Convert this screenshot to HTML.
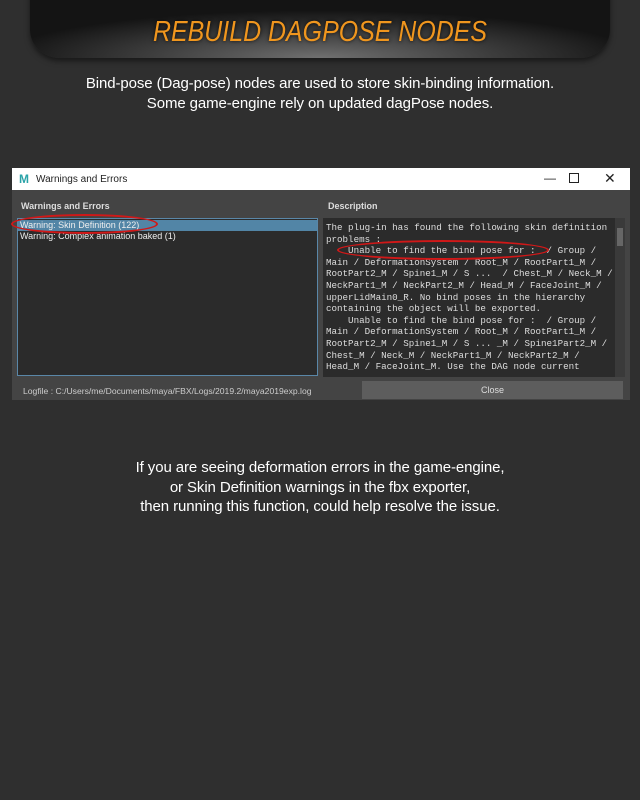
<!DOCTYPE html>
<html><head><style>
*{margin:0;padding:0;box-sizing:border-box}
body{width:640px;height:800px;background:#2f2f2f;position:relative;overflow:hidden;font-family:"Liberation Sans",sans-serif}
.hdr{position:absolute;left:30px;top:-10px;width:580px;height:68px;border-radius:0 0 30px 30px/0 0 28px 28px;background:radial-gradient(ellipse 55% 70% at 50% 100%,#707070 0%,#3c3c3c 55%,#141414 100%);box-shadow:0 3px 6px rgba(0,0,0,.5)}
.title{position:absolute;left:0;width:640px;top:16px;text-align:center;color:#f0961e;font-style:italic;font-size:29px;transform:scaleX(.86);text-shadow:0 0 4px rgba(0,0,0,.8)}
.t{position:absolute;left:0;width:640px;text-align:center;color:#fff;font-size:15px;line-height:19.5px;letter-spacing:-0.1px}
.dlg{position:absolute;left:12px;top:168px;width:618px;height:232px;background:#444}
.tb{position:absolute;left:0;top:0;width:618px;height:22px;background:#fff;color:#222;font-size:10px}
.lbl{position:absolute;color:#ddd;font-size:9px;font-weight:bold}
.list{position:absolute;left:5px;top:50px;width:301px;height:158px;background:#2b2b2b;border:1px solid #5a87a8}
.sel{position:absolute;left:0;top:1px;width:299px;height:11px;background:#5285a6}
.desc{position:absolute;left:311px;top:50px;width:302px;height:159px;background:#2b2b2b;font-family:"Liberation Mono",monospace;font-size:9.2px;line-height:11.6px;color:#ddd;padding:4px 0 0 3px;white-space:pre;overflow:hidden}
.sb{position:absolute;right:0;top:0;width:10px;height:159px;background:#3a3a3a}
.oval{position:absolute;border:2px solid #d01818;border-radius:50%}
</style></head><body>
<div class="hdr"></div>
<div class="title">REBUILD DAGPOSE NODES</div>
<div class="t" style="top:74px">Bind-pose (Dag-pose) nodes are used to store skin-binding information.<br>Some game-engine rely on updated dagPose nodes.</div>
<div class="dlg">
 <div class="tb"><span style="position:absolute;left:7px;top:4px;color:#2aa3a8;font-weight:bold;font-size:12px">M</span><span style="position:absolute;left:24px;top:6px">Warnings and Errors</span>
 <span style="position:absolute;left:532px;top:3px;font-size:12px">—</span><span style="position:absolute;left:557px;top:5px;width:10px;height:10px;border:1px solid #222"></span><span style="position:absolute;left:592px;top:2px;font-size:14px">✕</span></div>
 <div class="lbl" style="left:9px;top:33px">Warnings and Errors</div>
 <div class="lbl" style="left:316px;top:33px">Description</div>
 <div class="list"><div class="sel"></div>
  <div style="position:absolute;left:2px;top:1px;font-size:9px;color:#eee;line-height:10.5px">Warning: Skin Definition (122)<br>Warning: Complex animation baked (1)</div></div>
 <div class="desc">The plug-in has found the following skin definition
problems :
    Unable to find the bind pose for :  / Group /
Main / DeformationSystem / Root_M / RootPart1_M /
RootPart2_M / Spine1_M / S ...  / Chest_M / Neck_M /
NeckPart1_M / NeckPart2_M / Head_M / FaceJoint_M /
upperLidMain0_R. No bind poses in the hierarchy
containing the object will be exported.
    Unable to find the bind pose for :  / Group /
Main / DeformationSystem / Root_M / RootPart1_M /
RootPart2_M / Spine1_M / S ... _M / Spine1Part2_M /
Chest_M / Neck_M / NeckPart1_M / NeckPart2_M /
Head_M / FaceJoint_M. Use the DAG node current<div class="sb"><div style="position:absolute;left:2px;top:10px;width:6px;height:18px;background:#666"></div></div></div>
 <div style="position:absolute;left:11px;top:218px;font-size:8.6px;color:#ccc">Logfile : C:/Users/me/Documents/maya/FBX/Logs/2019.2/maya2019exp.log</div>
 <div style="position:absolute;left:350px;top:213px;width:261px;height:18px;background:#5d5d5d;color:#ddd;font-size:9px;text-align:center;line-height:18px">Close</div>
</div>
<div class="oval" style="left:11px;top:214px;width:147px;height:20px"></div>
<div class="oval" style="left:337px;top:240px;width:212px;height:20px"></div>
<div class="t" style="top:458px">If you are seeing deformation errors in the game-engine,<br>or Skin Definition warnings in the fbx exporter,<br>then running this function, could help resolve the issue.</div>
</body></html>
